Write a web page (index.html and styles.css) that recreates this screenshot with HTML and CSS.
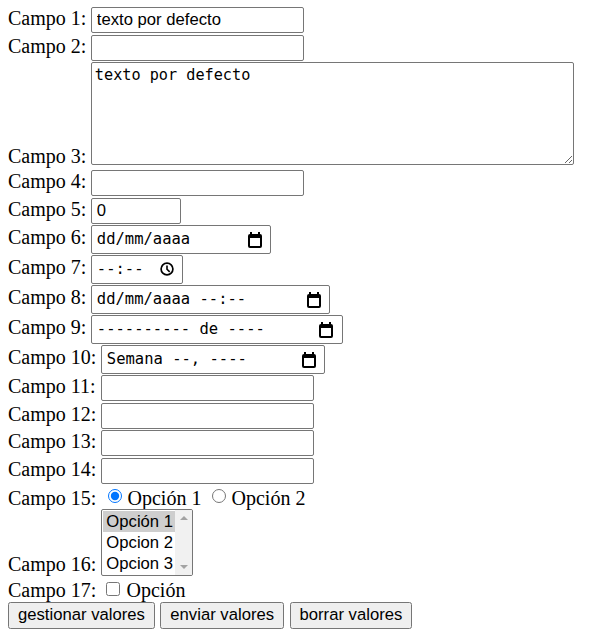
FILE: index.html
```html
<!DOCTYPE html>
<html lang="es">
<head>
<meta charset="utf-8">
<title>Formulario</title>
<link rel="stylesheet" href="styles.css">
</head>
<body>
<form class="form">
  <div class="row h-txt"><label class="lbl" for="c1">Campo 1:</label><input id="c1" class="txt" type="text" value="texto por defecto"></div>
  <div class="row h-txt"><label class="lbl" for="c2">Campo 2:</label><input id="c2" class="txt" type="password"></div>
  <div class="row h-area"><label class="lbl lbl-bottom" for="c3">Campo 3:</label><textarea id="c3" class="area">texto por defecto</textarea></div>
  <div class="row h-txt"><label class="lbl" for="c4">Campo 4:</label><input id="c4" class="txt" type="email"></div>
  <div class="row h-txt"><label class="lbl" for="c5">Campo 5:</label><input id="c5" class="txt num" type="number" value="0"></div>
  <div class="row h-date"><span class="lbl">Campo 6:</span><span class="dfield w-date"><span class="dtext">dd/mm/aaaa</span><svg class="cal" width="16" height="16" viewBox="0 0 16 16"><rect x="3" y="0" width="2" height="3.5"/><rect x="11" y="0" width="2" height="3.5"/><rect x="1" y="2" width="14" height="14" rx="2"/><rect x="3" y="6" width="10" height="8" fill="#fff"/></svg></span></div>
  <div class="row h-date"><span class="lbl">Campo 7:</span><span class="dfield w-time"><span class="dtext">--:--</span><svg class="clk" width="14" height="14" viewBox="0 0 14 14"><circle cx="7" cy="7" r="5.9" fill="none" stroke="#000" stroke-width="1.7"/><path d="M7 3.4V7.2l2.7 2.7" fill="none" stroke="#000" stroke-width="1.6"/></svg></span></div>
  <div class="row h-date"><span class="lbl">Campo 8:</span><span class="dfield w-dt"><span class="dtext">dd/mm/aaaa --:--</span><svg class="cal" width="16" height="16" viewBox="0 0 16 16"><rect x="3" y="0" width="2" height="3.5"/><rect x="11" y="0" width="2" height="3.5"/><rect x="1" y="2" width="14" height="14" rx="2"/><rect x="3" y="6" width="10" height="8" fill="#fff"/></svg></span></div>
  <div class="row h-date"><span class="lbl">Campo 9:</span><span class="dfield w-month"><span class="dtext">---------- de ----</span><svg class="cal" width="16" height="16" viewBox="0 0 16 16"><rect x="3" y="0" width="2" height="3.5"/><rect x="11" y="0" width="2" height="3.5"/><rect x="1" y="2" width="14" height="14" rx="2"/><rect x="3" y="6" width="10" height="8" fill="#fff"/></svg></span></div>
  <div class="row h-date"><span class="lbl">Campo 10:</span><span class="dfield w-week"><span class="dtext">Semana --, ----</span><svg class="cal" width="16" height="16" viewBox="0 0 16 16"><rect x="3" y="0" width="2" height="3.5"/><rect x="11" y="0" width="2" height="3.5"/><rect x="1" y="2" width="14" height="14" rx="2"/><rect x="3" y="6" width="10" height="8" fill="#fff"/></svg></span></div>
  <div class="row h-txt"><label class="lbl" for="c11">Campo 11:</label><input id="c11" class="txt" type="url"></div>
  <div class="row h-txt"><label class="lbl" for="c12">Campo 12:</label><input id="c12" class="txt" type="tel"></div>
  <div class="row h-txt"><label class="lbl" for="c13">Campo 13:</label><input id="c13" class="txt" type="text"></div>
  <div class="row h-txt"><label class="lbl" for="c14">Campo 14:</label><input id="c14" class="txt" type="text"></div>
  <div class="row h-radio top"><span class="lbl lbl-top">Campo 15:</span><input class="radio r-first" type="radio" name="c15" checked><span class="opt-txt lbl-top">Opción 1</span><input class="radio r-second" type="radio" name="c15"><span class="opt-txt lbl-top">Opción 2</span></div>
  <div class="row h-sel top"><span class="lbl lbl-bottom2">Campo 16:</span>
    <div class="sel" role="listbox" aria-multiselectable="true">
      <div class="opts">
        <div class="opt on" role="option">Opción 1</div>
        <div class="opt" role="option">Opcion 2</div>
        <div class="opt" role="option">Opcion 3</div>
      </div>
      <div class="sb"><span class="arr up"></span><span class="arr dn"></span></div>
    </div>
  </div>
  <div class="row h-check top"><span class="lbl lbl-top">Campo 17:</span><input class="check" type="checkbox"><span class="opt-txt lbl-top">Opción</span></div>
  <div class="row h-btn top"><button type="button" class="btn">gestionar valores</button><button type="submit" class="btn">enviar valores</button><button type="reset" class="btn">borrar valores</button></div>
</form>
</body>
</html>
```

FILE: styles.css
```css
html, body {
  margin: 0;
  padding: 0;
  background: #fff;
}
body {
  font-family: "Liberation Serif", "Times New Roman", serif;
  font-size: 20px;
  color: #000;
}
.form {
  display: flex;
  flex-direction: column;
  padding: 7px 0 0 8px;
}
.row {
  display: flex;
  align-items: baseline;
  flex: none;
}
.row.top {
  align-items: flex-start;
}
.h-txt { height: 27.5px; }
.h-area { height: 108px; align-items: flex-start; }
.h-date { height: 30px; }
.h-radio { height: 23.5px; }
.h-sel { height: 68.5px; }
.h-check { height: 24.5px; }
.h-btn { height: 27px; }

.lbl {
  line-height: 23px;
  margin-right: 5px;
  white-space: pre;
}
.lbl-bottom {
  align-self: flex-end;
  margin-bottom: 1.8px;
}
.lbl-bottom2 {
  align-self: flex-end;
  margin-bottom: 1.5px;
}
.lbl-top {
  margin-top: 1.75px;
}
.opt-txt {
  line-height: 23px;
  white-space: pre;
}

.txt {
  box-sizing: border-box;
  width: 213px;
  height: 26.25px;
  margin: 0;
  padding: 0 4px 0 4.5px;
  border: 1px solid #767676;
  border-radius: 2px;
  background: #fff;
  color: #000;
  font-family: "Liberation Sans", Arial, sans-serif;
  font-size: 16.67px;
  outline: none;
}
.num {
  width: 90px;
  -moz-appearance: textfield;
}
.num::-webkit-inner-spin-button,
.num::-webkit-outer-spin-button {
  -webkit-appearance: none;
  margin: 0;
}

.area {
  box-sizing: border-box;
  width: 483px;
  height: 103px;
  margin: 0;
  padding: 3.2px 2.5px;
  border: 1px solid #767676;
  border-radius: 2px;
  font-family: "DejaVu Sans Mono", monospace;
  font-size: 15.2px;
  color: #000;
  background: #fff;
  outline: none;
}

.dfield {
  box-sizing: border-box;
  display: inline-flex;
  align-items: center;
  justify-content: space-between;
  height: 28.75px;
  padding: 0 7px 0 4.5px;
  border: 1px solid #767676;
  border-radius: 2px;
  background: #fff;
  font-family: "DejaVu Sans Mono", monospace;
  font-size: 15.5px;
  color: #000;
}
.dtext {
  white-space: pre;
}
.cal {
  display: block;
  fill: #000;
  margin-top: 1px;
}
.clk {
  display: block;
  margin-right: 1px;
}
.w-date { width: 180px; }
.w-time { width: 92px; }
.w-dt { width: 239px; }
.w-month { width: 252px; padding-right: 8px; }
.w-week { width: 224px; }

.radio {
  width: 14px;
  height: 14px;
  margin: 3.5px 5.5px 0 0;
  accent-color: #0075ff;
}
.r-first { margin-left: 6.7px; }
.r-second { margin-left: 10.6px; }

.check {
  width: 14px;
  height: 14px;
  margin: 4.5px 6.5px 0 4.7px;
}

.sel {
  box-sizing: border-box;
  display: flex;
  width: 92px;
  height: 67.5px;
  border: 1px solid #767676;
  border-radius: 2px;
  background: #fff;
  overflow: hidden;
}
.opts {
  flex: 1;
  padding: 1px 0 0 1px;
}
.opt {
  height: 21px;
  line-height: 21px;
  padding-left: 3px;
  font-family: "Liberation Sans", Arial, sans-serif;
  font-size: 16.67px;
  color: #000;
  white-space: pre;
}
.opt.on {
  background: #cecece;
}
.sb {
  width: 17px;
  background: #f1f1f1;
  display: flex;
  flex-direction: column;
  justify-content: space-between;
  align-items: center;
  padding: 6px 0 6px;
  box-sizing: border-box;
}
.arr {
  width: 0;
  height: 0;
  border-left: 4px solid transparent;
  border-right: 4px solid transparent;
}
.arr.up {
  border-bottom: 4px solid #a3a3a3;
}
.arr.dn {
  border-top: 4px solid #a3a3a3;
}

.btn {
  box-sizing: border-box;
  height: 27px;
  margin: 0 5.5px 0 0;
  padding: 0 9px;
  border: 1px solid #767676;
  border-radius: 2.5px;
  background: #efefef;
  color: #000;
  font-family: "Liberation Sans", Arial, sans-serif;
  font-size: 16.67px;
}
```
